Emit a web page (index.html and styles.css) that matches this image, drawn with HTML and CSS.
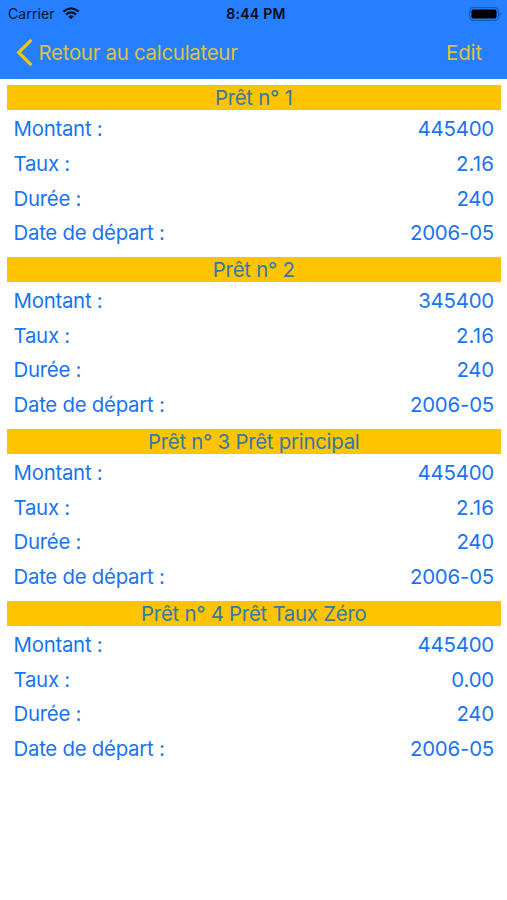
FILE: index.html
```html
<!DOCTYPE html>
<html lang="fr">
  <head>
    <meta charset="UTF-8" />
    <meta name="viewport" content="width=device-width, initial-scale=1.0" />
    <title>Liste des prêts</title>
    <link rel="stylesheet" href="styles.css">
  </head>
  <body>
    <header>
      <div class="status-bar">
        <div class="carrier">
          <span class="carrier-name">Carrier</span>
          <svg class="wifi" width="18" height="13" viewBox="0 0 18 13">
            <path d="M1.3 4.6Q9 -1.9 16.7 4.6" />
            <path d="M4 7.5Q9 3.3 14 7.5" />
            <path class="wifi-dot" d="M6.2 9.4Q9 7.2 11.8 9.4L9 12.3Z" />
          </svg>
        </div>
        <div class="clock">8:44 PM</div>
        <svg class="battery" width="33" height="14" viewBox="0 0 33 14">
          <rect class="battery-case" x="0.7" y="0.7" width="28.6" height="12.6" rx="3.6" />
          <rect x="2.5" y="2.4" width="25" height="9.2" rx="1.8" />
          <path class="battery-tip" d="M30.6 4.9Q32 5.5 32 7Q32 8.5 30.6 9.1Z" />
        </svg>
      </div>
      <nav class="nav-bar">
        <a class="back">
          <svg width="17" height="27" viewBox="0 0 17 27">
            <path d="M14.4 1.9L2.6 13.5L14.4 25.1" />
          </svg>
          <span class="back-label">Retour au calculateur</span>
        </a>
        <a class="edit">Edit</a>
      </nav>
    </header>

    <main>
      <section class="loan">
        <h2>Prêt n° 1</h2>
        <div class="row"><span>Montant :</span><span class="value">445400</span></div>
        <div class="row"><span>Taux :</span><span class="value rate">2.16</span></div>
        <div class="row"><span>Durée :</span><span class="value">240</span></div>
        <div class="row"><span>Date de départ :</span><span class="value">2006-05</span></div>
      </section>

      <section class="loan">
        <h2>Prêt n° 2</h2>
        <div class="row"><span>Montant :</span><span class="value">345400</span></div>
        <div class="row"><span>Taux :</span><span class="value rate">2.16</span></div>
        <div class="row"><span>Durée :</span><span class="value">240</span></div>
        <div class="row"><span>Date de départ :</span><span class="value">2006-05</span></div>
      </section>

      <section class="loan">
        <h2>Prêt n° 3 Prêt principal</h2>
        <div class="row"><span>Montant :</span><span class="value">445400</span></div>
        <div class="row"><span>Taux :</span><span class="value rate">2.16</span></div>
        <div class="row"><span>Durée :</span><span class="value">240</span></div>
        <div class="row"><span>Date de départ :</span><span class="value">2006-05</span></div>
      </section>

      <section class="loan">
        <h2>Prêt n° 4 Prêt Taux Zéro</h2>
        <div class="row"><span>Montant :</span><span class="value">445400</span></div>
        <div class="row"><span>Taux :</span><span class="value">0.00</span></div>
        <div class="row"><span>Durée :</span><span class="value">240</span></div>
        <div class="row"><span>Date de départ :</span><span class="value">2006-05</span></div>
      </section>
    </main>
  </body>
</html>
```

FILE: styles.css
```css
body {
  margin: 0;
  background-color: #fff;
  color: #1a74f0;
  font-family: Inter, "Liberation Sans", sans-serif;
  font-size: 20.4px;
  letter-spacing: -0.26px;
}
header {
  height: 79px;
  background-color: #267fff;
}
.status-bar {
  display: grid;
  grid-template-columns: 1fr auto 1fr;
  align-items: center;
  height: 27px;
  padding: 0 5px 0 8px;
  color: #04152e;
  font-size: 14px;
  letter-spacing: 0;
}
.carrier {
  display: flex;
  align-items: center;
  gap: 7px;
}
.carrier-name {
  letter-spacing: 0.1px;
}
.wifi {
  fill: none;
  stroke: #04152e;
  stroke-width: 2.3;
}
.wifi-dot {
  fill: #04152e;
  stroke: none;
}
.clock {
  padding-left: 2px;
  color: #020b18;
  font-weight: 600;
  letter-spacing: 0.3px;
}
.battery {
  justify-self: end;
}
.battery-case {
  fill: none;
  stroke: #1a5cba;
  stroke-width: 1.3;
}
.battery-tip {
  fill: #1a5cba;
}
.nav-bar {
  display: flex;
  justify-content: space-between;
  align-items: center;
  height: 50px;
  padding: 0 25px 0 16px;
  color: #dcc243;
}
.back {
  display: flex;
  align-items: center;
  gap: 5.5px;
}
.back svg {
  fill: none;
  stroke: #f0c41c;
  stroke-width: 3.2;
  stroke-linecap: round;
}
.edit {
  letter-spacing: -0.1px;
}
main {
  padding: 6.3px 6.5px 0 7px;
}
.loan {
  height: 171.9px;
}
h2 {
  height: 24.7px;
  margin: 0 0 2.4px;
  background-color: #ffc400;
  color: #3579a8;
  font-size: 20.4px;
  font-weight: 400;
  line-height: 25.5px;
  text-align: center;
}
.row {
  display: flex;
  justify-content: space-between;
  height: 34.6px;
  padding: 0 6.5px;
  line-height: 34.6px;
}
.value {
  letter-spacing: -0.2px;
}
.rate {
  letter-spacing: 0.15px;
}
```
